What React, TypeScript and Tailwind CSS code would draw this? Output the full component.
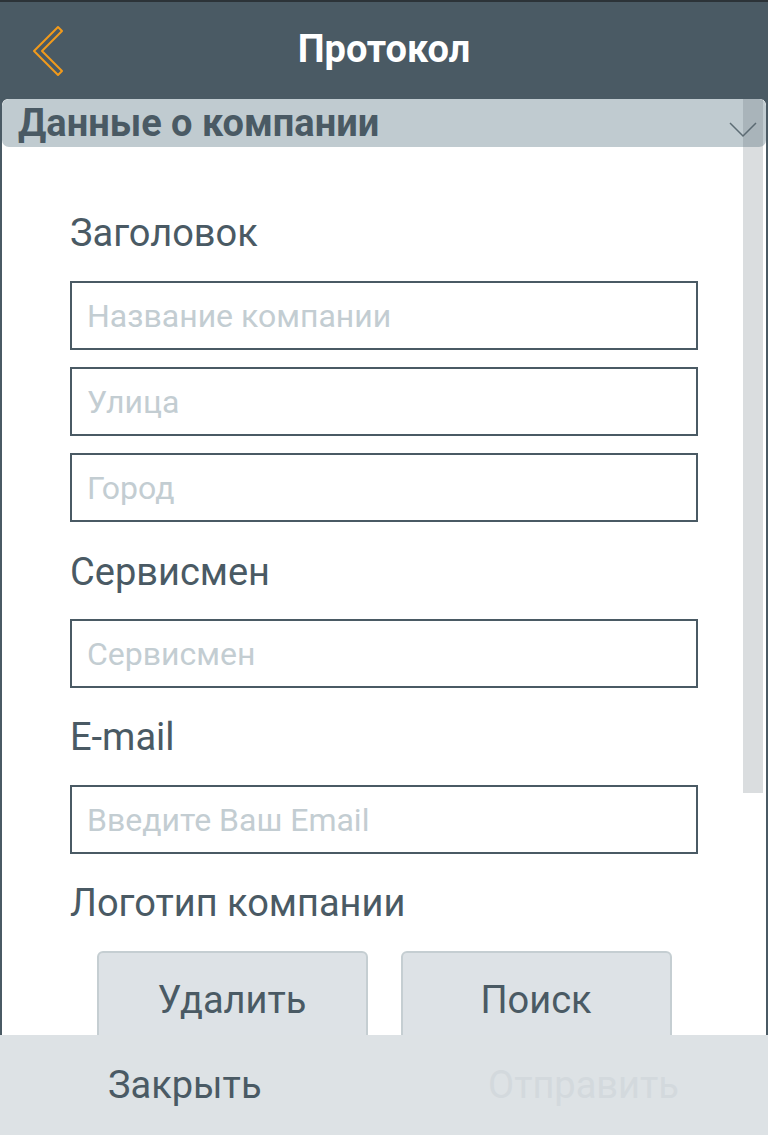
import React from 'react';

const fields = {
  header: ['Название компании', 'Улица', 'Город'],
};

function BackIcon() {
  return (
    <svg width="44" height="60" viewBox="0 0 44 60" className="absolute left-[22px] top-[20px]">
      <polygon
        points="12,29 36,5 40,9 20,29 40,49 36,53"
        fill="none"
        stroke="#f29a1b"
        strokeWidth="2"
        strokeLinejoin="round"
      />
    </svg>
  );
}

function Field({ placeholder }: { placeholder: string }) {
  return (
    <input
      type="text"
      placeholder={placeholder}
      className="h-[69px] w-full border-2 border-[#4a5a64] bg-white px-[15px] text-[32px] text-[#4a5a64] outline-none placeholder:text-[#c3cdd2]"
    />
  );
}

function Label({ children }: { children: React.ReactNode }) {
  return (
    <div className="flex h-[48px] items-center text-[38px] leading-none text-[#4a5a64]">{children}</div>
  );
}

export default function App() {
  return (
    <div
      className="relative flex h-[1135px] w-[768px] flex-col overflow-hidden bg-[#4a5a64]"
      style={{ fontFamily: 'Roboto, "Noto Sans", sans-serif' }}
    >
      {/* Top bar */}
      <div className="relative flex h-[97px] shrink-0 items-center justify-center border-t-2 border-[#2c3338] bg-[#4a5a64]">
        <BackIcon />
        <h1 className="text-[38px] font-bold text-white">Протокол</h1>
      </div>

      {/* Panel */}
      <div className="relative flex-1 overflow-hidden rounded-t-[8px] border-2 border-b-0 border-[#4a5a64] bg-white">
        <div className="relative flex h-[48px] items-center rounded-[7px] bg-[#c0cbd0] pl-[16px]">
          <span className="text-[38px] font-bold leading-none text-[#4a5a64]">Данные о компании</span>
          <svg width="28" height="16" viewBox="0 0 28 16" className="absolute right-[9px] top-[23px]">
            <polyline points="1,1 14,14 27,1" fill="none" stroke="#5d6c74" strokeWidth="1.5" />
          </svg>
        </div>

        {/* Scrollbar */}
        <div className="absolute right-[3px] top-[-2px] h-[696px] w-[20px] bg-[rgba(88,102,109,0.22)]" />

        <div className="flex flex-col px-[68px] pt-[62px]">
          <Label>Заголовок</Label>
          <div className="mt-[24px] flex flex-col gap-[17px]">
            {fields.header.map((p) => (
              <Field key={p} placeholder={p} />
            ))}
          </div>

          <div className="mt-[26px]">
            <Label>Сервисмен</Label>
          </div>
          <div className="mt-[23px]">
            <Field placeholder="Сервисмен" />
          </div>

          <div className="mt-[25px]">
            <Label>E-mail</Label>
          </div>
          <div className="mt-[24px]">
            <Field placeholder="Введите Ваш Email" />
          </div>

          <div className="mt-[25px]">
            <Label>Логотип компании</Label>
          </div>
          <div className="mt-[24px] flex justify-center gap-[33px]">
            <button className="flex h-[110px] w-[271px] items-start justify-center rounded-t-[6px] border-2 border-[#c5ced2] bg-[#dde2e6] pt-[25px] text-[38px] leading-[44px] text-[#4a5a64]">
              Удалить
            </button>
            <button className="flex h-[110px] w-[271px] items-start justify-center rounded-t-[6px] border-2 border-[#c5ced2] bg-[#dde2e6] pt-[25px] text-[38px] leading-[44px] text-[#4a5a64]">
              Поиск
            </button>
          </div>
        </div>
      </div>

      {/* Footer */}
      <div className="grid h-[100px] shrink-0 grid-cols-2 items-center bg-[#dde2e5]">
        <span className="pl-[108px] text-[38px] text-[#4a5a64]">Закрыть</span>
        <span className="pl-[104px] text-[38px] text-[#d3d9dd]">Отправить</span>
      </div>
    </div>
  );
}
